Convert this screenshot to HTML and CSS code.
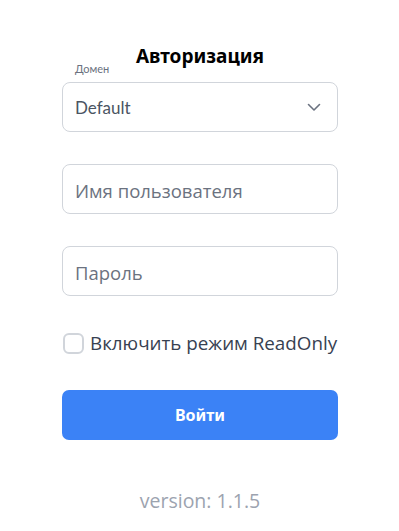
FILE: index.html
```html
<!DOCTYPE html>
<html lang="ru">
<head>
<meta charset="utf-8">
<link rel="stylesheet" href="styles.css">
</head>
<body>
<main class="page">
  <form class="auth">
    <h1 class="title">Авторизация</h1>
    <div class="field">
      <label class="label">Домен</label>
      <div class="select">
        <span class="select-value">Default</span>
        <svg class="chevron" width="16" height="16" viewBox="0 0 16 16"><path d="M2.5 5.5 L8 11 L13.5 5.5" fill="none" stroke="#6b7280" stroke-width="1.6" stroke-linecap="round" stroke-linejoin="round"/></svg>
      </div>
    </div>
    <div class="input">Имя пользователя</div>
    <div class="input">Пароль</div>
    <label class="check">
      <span class="box"></span>
      <span class="check-text">Включить режим ReadOnly</span>
    </label>
    <button type="button" class="btn">Войти</button>
    <p class="version">version: 1.1.5</p>
  </form>
</main>
</body>
</html>
```
FILE: styles.css
```css
* { box-sizing: border-box; }
html, body { margin: 0; padding: 0; background: #fff; }
body { font-family: "Open Sans", "Noto Sans", sans-serif; }
.page { display: flex; justify-content: center; }
.auth {
  width: 276px;
  margin-left: 1px;
  display: flex;
  flex-direction: column;
  padding-top: 44px;
}
.title {
  margin: 0;
  text-align: center;
  font-family: "Noto Sans", sans-serif;
  font-weight: 700;
  font-size: 19px;
  line-height: 24px;
  color: #000;
  height: 13px;
}
.field { display: flex; flex-direction: column; }
.label {
  font-family: "Lato", sans-serif;
  font-size: 11px;
  line-height: 14px;
  color: #6b7280;
  padding-left: 13px;
  margin-top: 5px;
  margin-bottom: 6px;
}
.select {
  height: 50px;
  border: 1px solid #d1d5db;
  border-radius: 8px;
  display: flex;
  align-items: center;
  justify-content: space-between;
  padding: 0 15px 0 12px;
}
.select-value {
  font-family: "Lato", sans-serif;
  font-size: 17px;
  color: #4b5563;
}
.input {
  height: 50px;
  margin-top: 32px;
  border: 1px solid #d1d5db;
  border-radius: 8px;
  display: flex;
  align-items: center;
  padding: 3px 12px 0;
  font-size: 18.5px;
  color: #6b7280;
}
.check {
  margin-top: 36px;
  display: flex;
  align-items: center;
  gap: 6px;
  height: 22px;
}
.box {
  flex: none;
  width: 21px;
  height: 21px;
  border: 2px solid #d1d5db;
  border-radius: 6px;
  margin-left: 1px;
}
.check-text {
  font-size: 18.8px;
  color: #374151;
  white-space: nowrap;
}
.btn {
  margin-top: 36px;
  height: 50px;
  border: none;
  border-radius: 7px;
  background: #3b82f6;
  color: #fff;
  font-family: "Noto Sans", sans-serif;
  font-weight: 700;
  font-size: 16px;
}
.version {
  margin: 47px 0 0;
  text-align: center;
  font-size: 19.5px;
  color: #9ca3af;
}
```
